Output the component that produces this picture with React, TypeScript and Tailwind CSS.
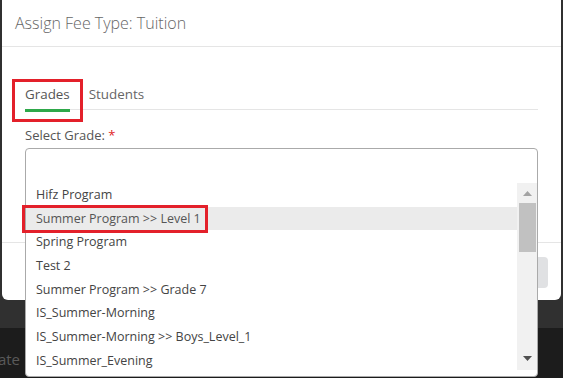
import React from "react";

const GRADES = [
  "Hifz Program",
  "Summer Program >> Level 1",
  "Spring Program",
  "Test 2",
  "Summer Program >> Grade 7",
  "IS_Summer-Morning",
  "IS_Summer-Morning >> Boys_Level_1",
  "IS_Summer_Evening",
];

export default function App() {
  return (
    <div
      className="relative h-[378px] w-[563px] overflow-hidden bg-[#1c1c1c]"
      style={{ fontFamily: '"Open Sans", "Liberation Sans", sans-serif' }}
    >
      {/* backdrop band behind the modal */}
      <div className="h-[328px] bg-[#303030] pl-[2px] pr-[2px]">
        {/* Modal */}
        <div className="flex h-[300px] flex-col rounded-b-[6px] bg-white">
          <div className="flex h-[47px] shrink-0 items-center border-b border-[#e5e5e5] px-[13px] pb-[1px] text-[16px] font-light text-[#666]">
            Assign Fee Type: Tuition
          </div>

          <div className="min-h-0 flex-1 px-[23px] pt-[37px]">
            {/* Tabs */}
            <div className="flex gap-[19px] border-b border-[#e5e5e5]">
              <div className="-mb-[3px] border-b-[3px] border-[#2ea84a] pb-[5px] text-[13.4px] leading-[20px] text-[#555]">
                Grades
              </div>
              <div className="pb-[5px] text-[13.4px] leading-[20px] text-[#666]">Students</div>
            </div>

            <div className="mt-[16px] text-[13px] leading-[18px] text-[#555]">
              Select Grade: <span className="text-[#e02424]">*</span>
            </div>

            {/* Select with open dropdown */}
            <div className="relative z-10 mt-[4px] h-[229px] rounded-[4px] border border-[#aaa] bg-white">
              <div className="h-[34px]" />
              <div className="flex h-[187px] overflow-hidden">
                <div className="flex-1">
                  {GRADES.map((g, i) => (
                    <div
                      key={g}
                      className={
                        "h-[23.7px] pl-[10px] text-[12.5px] leading-[23.7px] " +
                        (i === 1 ? "bg-[#ebebeb] text-[#555]" : "text-[#444]")
                      }
                    >
                      {g}
                    </div>
                  ))}
                </div>
                {/* scrollbar */}
                <div className="flex w-[20px] flex-col bg-[#f1f1f1]">
                  <div className="flex h-[20px] items-center justify-center">
                    <svg width="9" height="5" viewBox="0 0 9 5">
                      <path d="M0 5 L4.5 0 L9 5 Z" fill="#a3a3a3" />
                    </svg>
                  </div>
                  <div className="ml-[2px] mr-[1px] h-[49px] bg-[#c1c1c1]" />
                  <div className="flex-1" />
                  <div className="flex h-[24px] items-center justify-center">
                    <svg width="9" height="5" viewBox="0 0 9 5">
                      <path d="M0 0 L9 0 L4.5 5 Z" fill="#505050" />
                    </svg>
                  </div>
                </div>
              </div>
            </div>
          </div>

          {/* Footer */}
          <div className="flex h-[58px] shrink-0 justify-end border-t border-[#e5e5e5] pr-[13px] pt-[14px]">
            <div className="flex h-[31px] w-[90px] items-center justify-center rounded-[4px] bg-[#e0e1e3] text-[13px] text-[#333]">
              Close
            </div>
          </div>
        </div>
      </div>

      <div className="-ml-[13px] mt-[20px] text-[15px] text-[#5a5a5a]">Date</div>

      {/* annotation boxes */}
      <div className="absolute left-[12px] top-[79px] h-[43px] w-[71px] border-[3px] border-[#e3202a]" />
      <div className="absolute left-[22px] top-[205px] z-20 h-[28px] w-[186px] border-[3px] border-[#e3202a]" />
    </div>
  );
}
